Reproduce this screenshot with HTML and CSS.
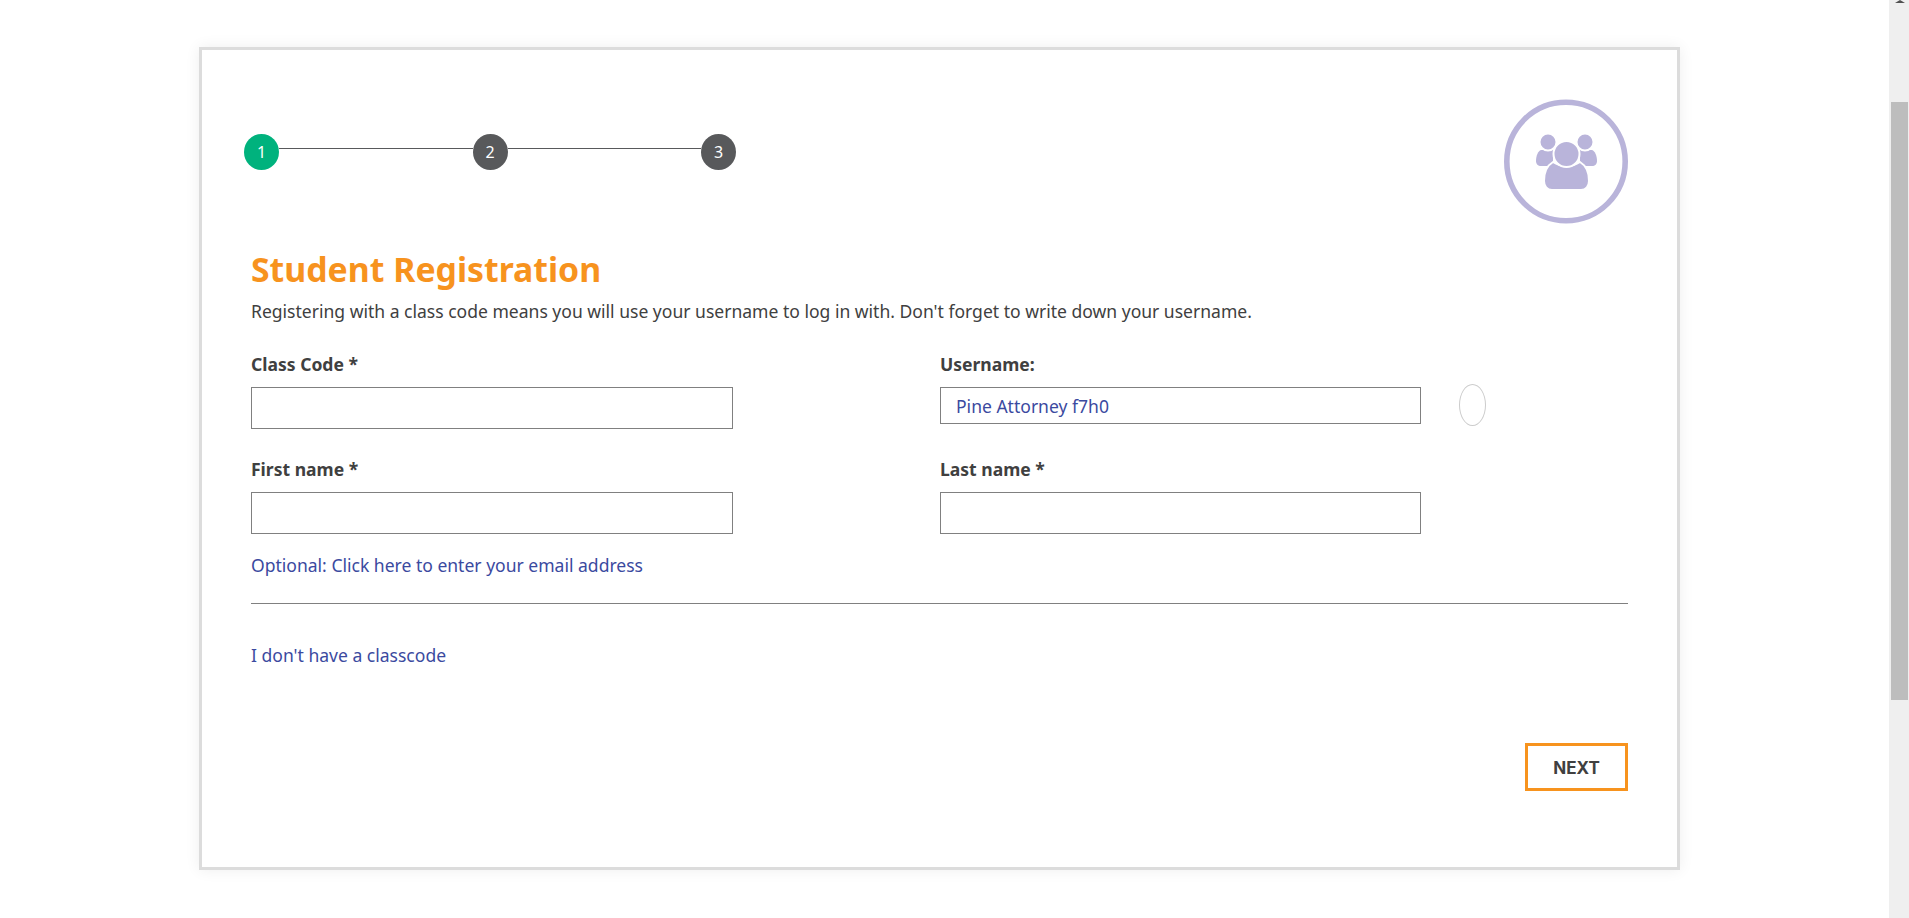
FILE: index.html
```html
<!DOCTYPE html>
<html lang="en">
<head>
  <meta charset="UTF-8" />
  <title>Student Registration</title>
  <link rel="stylesheet" href="styles.css">
</head>
<body>
  <div class="page">
    <main class="card">
      <div class="card-top">
        <div class="steps">
          <div class="step step-active">1</div>
          <div class="step-line"></div>
          <div class="step">2</div>
          <div class="step-line"></div>
          <div class="step">3</div>
        </div>
        <svg class="group-icon" viewBox="0 0 124 125" width="124" height="125" aria-hidden="true">
          <circle class="ring" cx="62" cy="62.5" r="59.2" />
          <path class="person" d="M37 51 C34 52 32 57 32 62 C32 65 34 67 37 67 L49 67 L49 51 Z" />
          <path class="person" d="M88 51 C91 52 93 57 93 62 C93 65 91 67 88 67 L76 67 L76 51 Z" />
          <circle class="person halo" cx="44" cy="43" r="8.5" />
          <circle class="person halo" cx="81" cy="43" r="8.5" />
          <path class="person halo" d="M49 63 C52 65 57 67 62.5 67 C68 67 73 65 76 63 C81 66 85 72 85 82 C85 87 82 91 77 91 L48 91 C43 91 40 87 40 82 C40 72 44 66 49 63 Z" />
          <circle class="person halo" cx="62.5" cy="55" r="13" />
        </svg>
      </div>

      <h1 class="title">Student Registration</h1>
      <p class="intro">Registering with a class code means you will use your username to log in with. Don't forget to write down your username.</p>

      <form class="reg-form">
        <div class="field">
          <label class="field-label">Class Code *</label>
          <input class="field-input" type="text" />
        </div>
        <div class="field">
          <label class="field-label">Username:</label>
          <div class="username-row">
            <input class="field-input username-input" type="text" value="Pine Attorney f7h0" />
            <div class="refresh-btn"></div>
          </div>
        </div>
        <div class="field">
          <label class="field-label">First name *</label>
          <input class="field-input" type="text" />
        </div>
        <div class="field">
          <label class="field-label">Last name *</label>
          <input class="field-input" type="text" />
        </div>
      </form>

      <a class="link email-link" href="#">Optional: Click here to enter your email address</a>
      <hr class="divider" />
      <a class="link no-code-link" href="#">I don't have a classcode</a>

      <div class="actions">
        <button class="next-btn" type="button">NEXT</button>
      </div>
    </main>
  </div>
  <div class="scrollbar">
    <div class="scroll-arrow"></div>
    <div class="scroll-thumb"></div>
  </div>
</body>
</html>
```

FILE: styles.css
```css
html, body {
  height: 100%;
}

body {
  margin: 0;
  display: flex;
  overflow: hidden;
  background: #fff;
  color: #404040;
  font-family: "Noto Sans", "Open Sans", sans-serif;
  font-size: 17.55px;
}

.page {
  flex: 1;
  padding: 47px 0 0 199px;
}

.card {
  box-sizing: border-box;
  width: 1481px;
  height: 823px;
  padding: 49px 49px 0 49px;
  background: #fff;
  border: 3px solid #dcdcdc;
  box-shadow: 0 0 14px rgba(0, 0, 0, 0.07);
}

.card-top {
  display: flex;
  justify-content: space-between;
  align-items: flex-start;
  height: 125px;
}

.steps {
  display: flex;
  align-items: flex-start;
  margin: 35px 0 0 -7px;
}

.step {
  display: flex;
  justify-content: center;
  align-items: center;
  width: 35px;
  height: 36px;
  border-radius: 50%;
  background: #58595b;
  color: #fff;
  font-size: 16px;
}

.step-active {
  background: #00b27d;
}

.step-line {
  width: 193.5px;
  height: 1px;
  margin-top: 14px;
  background: #58595b;
}

.group-icon {
  display: block;
}

.ring {
  fill: none;
  stroke: #b9b4da;
  stroke-width: 5.6;
}

.person {
  fill: #b9b4da;
}

.halo {
  stroke: #fff;
  stroke-width: 2;
}

.title {
  margin: 23px 0 0;
  color: #f7931e;
  font-family: "Noto Sans", sans-serif;
  font-size: 33.8px;
  font-weight: 700;
  line-height: 44px;
}

.intro {
  margin: 8px 0 0;
  line-height: 24px;
}

.reg-form {
  display: grid;
  grid-template-columns: 482px 481px;
  column-gap: 207px;
  row-gap: 28px;
  margin-top: 29px;
}

.field-label {
  display: block;
  height: 35px;
  line-height: 24px;
  font-weight: 700;
}

.field-input {
  display: block;
  box-sizing: border-box;
  width: 100%;
  height: 42px;
  padding: 0 15px;
  border: 1px solid #808080;
  border-radius: 0;
  background: #fff;
  color: #3b4a9f;
  font-family: inherit;
  font-size: 17.55px;
}

.username-row {
  display: flex;
  align-items: flex-start;
}

.username-input {
  flex: none;
  height: 37px;
}

.refresh-btn {
  flex: none;
  box-sizing: border-box;
  width: 27px;
  height: 42px;
  margin: -3px 0 0 38px;
  border: 1px solid #ccc;
  border-radius: 50%;
}

.link {
  display: block;
  color: #3b4a9f;
  line-height: 24px;
  text-decoration: none;
}

.email-link {
  margin-top: 19px;
}

.divider {
  height: 1px;
  margin: 26px 0 0;
  border: 0;
  background: #808080;
}

.no-code-link {
  margin-top: 39px;
}

.actions {
  display: flex;
  justify-content: flex-end;
  margin-top: 76px;
}

.next-btn {
  box-sizing: border-box;
  width: 103px;
  height: 48px;
  padding: 2px 0 0;
  border: 3px solid #f7931e;
  background: #fff;
  color: #404040;
  font-family: "Inter", sans-serif;
  font-size: 17px;
  font-weight: 700;
}

.scrollbar {
  flex: none;
  position: relative;
  width: 20px;
  background: #efefef;
}

.scroll-arrow {
  position: absolute;
  top: 0;
  left: 6px;
  border-left: 5px solid transparent;
  border-right: 5px solid transparent;
  border-bottom: 3px solid #505050;
}

.scroll-thumb {
  position: absolute;
  top: 102px;
  left: 2px;
  width: 17px;
  height: 598px;
  background: #bdbdbd;
}
```
